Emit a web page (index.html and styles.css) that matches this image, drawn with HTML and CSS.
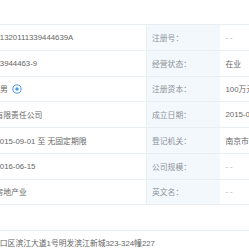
FILE: index.html
```html
<!DOCTYPE html>
<html lang="zh-CN">
<head>
    <meta charset="UTF-8">
    <meta name="viewport" content="width=device-width, initial-scale=1.0">
    <title>工商信息</title>
    <link rel="stylesheet" href="styles.css">
</head>
<body>
    <div class="info-table">
        <div class="info-row">
            <div class="cell value">91320111339444639A</div>
            <div class="cell label">注册号：</div>
            <div class="cell value empty">--</div>
        </div>
        <div class="info-row">
            <div class="cell value">33944463-9</div>
            <div class="cell label">经营状态：</div>
            <div class="cell value">在业</div>
        </div>
        <div class="info-row">
            <div class="cell value person">
                <span class="person-name">男</span>
                <svg class="person-icon" width="10" height="10" viewBox="0 0 10 10">
                    <circle cx="5" cy="5" r="4.1" fill="none" stroke="#4a97e8" stroke-width="1"/>
                    <circle cx="5" cy="5" r="1.7" fill="#4a97e8"/>
                </svg>
            </div>
            <div class="cell label">注册资本：</div>
            <div class="cell value">100万元人民币</div>
        </div>
        <div class="info-row">
            <div class="cell value">有限责任公司</div>
            <div class="cell label">成立日期：</div>
            <div class="cell value">2015-09-01</div>
        </div>
        <div class="info-row">
            <div class="cell value">2015-09-01 至 无固定期限</div>
            <div class="cell label">登记机关：</div>
            <div class="cell value">南京市浦口区市场监督管理局</div>
        </div>
        <div class="info-row">
            <div class="cell value">2016-06-15</div>
            <div class="cell label">公司规模：</div>
            <div class="cell value empty">--</div>
        </div>
        <div class="info-row">
            <div class="cell value">房地产业</div>
            <div class="cell label">英文名：</div>
            <div class="cell value empty">--</div>
        </div>
        <div class="info-row wide">
            <div class="cell value">-</div>
        </div>
        <div class="info-row wide last">
            <div class="cell value address">浦口区滨江大道1号明发滨江新城323-324幢227</div>
        </div>
    </div>
</body>
</html>
```

FILE: styles.css
```css
* {
    margin: 0;
    padding: 0;
    box-sizing: border-box;
}

body {
    font-family: "Liberation Sans", "Noto Sans CJK SC", sans-serif;
    font-size: 7.8px;
    color: #666;
    background: #fff;
    overflow: hidden;
}

.info-table {
    margin-top: 24px;
    margin-left: -10px;
    width: 400px;
    border-top: 1px solid #e9eef3;
}

.info-row {
    display: grid;
    grid-template-columns: 156px 74px 170px;
    height: 25.75px;
    border-bottom: 1px solid #e9eef3;
}

.info-row.wide {
    grid-template-columns: 1fr;
}

.info-row.last {
    border-bottom: none;
    height: 22px;
}

.cell {
    display: flex;
    align-items: center;
    white-space: nowrap;
    overflow: hidden;
}

.value {
    padding-left: 5.5px;
}

.label {
    padding-left: 5px;
    background: #f3f8fc;
    border-left: 1px solid #e9eef3;
    color: #8c939b;
}

.empty {
    letter-spacing: 2px;
    color: #aaa;
}

.person-name {
    margin-left: 4.5px;
}

.person-icon {
    margin-left: 4px;
}

.address {
    padding-left: 2px;
}
```
